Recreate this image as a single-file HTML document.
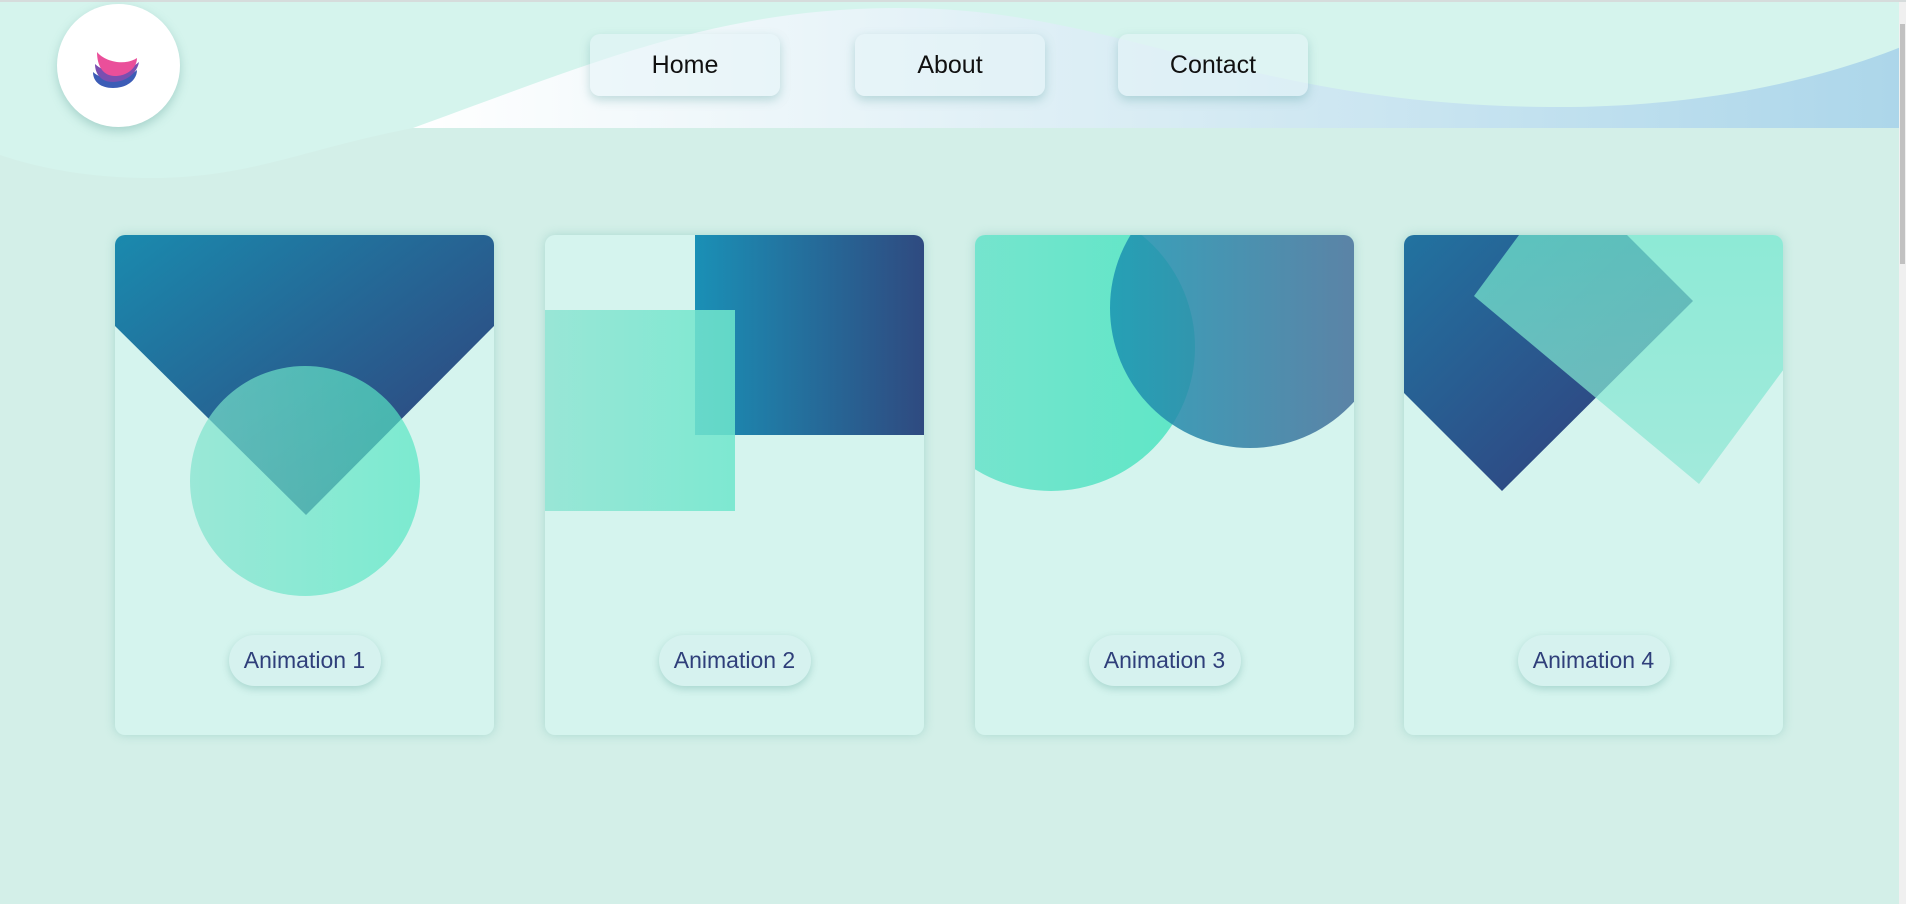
<!DOCTYPE html>
<html><head><meta charset="utf-8"><style>
*{margin:0;padding:0;box-sizing:border-box}
html,body{width:1906px;height:904px;overflow:hidden;background:#d3efe8;font-family:"Liberation Sans",sans-serif}
.topline{position:absolute;left:0;top:0;width:1906px;height:2px;background:#d6dcdc}
.hdr{position:absolute;left:0;top:0}
.logo{position:absolute;left:57px;top:4px;width:123px;height:123px;border-radius:50%;background:#fff;box-shadow:0 4px 10px rgba(80,150,140,.35)}
.nav{position:absolute;top:34px;height:62px;width:190px;border-radius:10px;background:rgba(230,244,248,.55);box-shadow:0 4px 10px rgba(90,160,160,.35);font-size:25px;color:#111;display:flex;align-items:center;justify-content:center}
.card{position:absolute;top:235px;width:379px;height:500px;border-radius:10px;background:#d5f4ee;overflow:hidden;box-shadow:0 0 10px rgba(120,190,180,.45)}
.card svg{position:absolute;left:0;top:0}
.pill{position:absolute;left:50%;transform:translateX(-50%);top:400px;width:152px;height:51px;border-radius:26px;background:#d6f2ef;box-shadow:0 3px 8px rgba(100,170,160,.4);color:#2f3f7a;font-size:23px;display:flex;align-items:center;justify-content:center}
.sb{position:absolute;right:0;top:2px;width:7px;height:902px;background:#f0f0f0}
.sb div{position:absolute;left:1px;top:22px;width:5px;height:240px;background:#c1c1c1}
</style></head><body>
<svg class="hdr" width="1906" height="200" viewBox="0 0 1906 200">
<defs><linearGradient id="wg" x1="0" x2="1" y1="0" y2="0"><stop offset="0" stop-color="#ffffff"/><stop offset="0.5" stop-color="#d8ecf4"/><stop offset="1" stop-color="#acd6ea"/></linearGradient></defs>
<path d="M0 0H1906V128H413C300 150 250 178 150 178C80 178 30 165 0 155Z" fill="#d5f4ed"/>
<path d="M413 128C600 60 720 8 900 8C1120 8 1240 105 1550 107C1700 108 1820 80 1906 45V128Z" fill="url(#wg)"/>
</svg>
<div class="topline"></div>
<div class="logo"><svg width="123" height="123" viewBox="0 0 123 123">
<path d="M36 68C44 76 66 78 80 66C80 76 70 84 56 84C44 84 36 78 36 68Z" fill="#3c5cb6"/>
<path d="M38 60C48 70 68 70 82 58C80 70 68 78 56 78C44 78 38 70 38 60Z" fill="#7a4fb0"/>
<path d="M40 48C48 58 68 62 80 54C80 64 70 72 58 72C46 72 40 62 40 48Z" fill="#ea4f9a"/>
</svg></div>
<div class="nav" style="left:590px">Home</div>
<div class="nav" style="left:855px">About</div>
<div class="nav" style="left:1118px">Contact</div>

<div class="card" style="left:115px"><svg width="379" height="500">
<defs><linearGradient id="d1" x1="0" y1="0" x2="1" y2="1"><stop offset="0" stop-color="#1a8aae"/><stop offset="1" stop-color="#333a76"/></linearGradient>
<linearGradient id="t1" x1="0" x2="1"><stop offset="0" stop-color="#7ee2cc"/><stop offset="1" stop-color="#52e6c2"/></linearGradient></defs>
<polygon points="0,0 379,0 379,91 191,280 0,91" fill="url(#d1)"/>
<circle cx="190" cy="246" r="115" fill="url(#t1)" opacity=".68"/>
</svg><div class="pill">Animation 1</div></div>

<div class="card" style="left:545px"><svg width="379" height="500">
<defs><linearGradient id="d2" x1="0" x2="1"><stop offset="0" stop-color="#1a90b6"/><stop offset="1" stop-color="#2f4a80"/></linearGradient>
<linearGradient id="t2" x1="0" x2="1"><stop offset="0" stop-color="#8ee4d2"/><stop offset="1" stop-color="#6ee6cc"/></linearGradient></defs>
<rect x="150" y="0" width="229" height="200" fill="url(#d2)"/>
<rect x="0" y="75" width="190" height="201" fill="url(#t2)" opacity=".85"/>
</svg><div class="pill">Animation 2</div></div>

<div class="card" style="left:975px"><svg width="379" height="500">
<defs><linearGradient id="d3" x1="0" x2="1"><stop offset="0" stop-color="#1a94b2"/><stop offset="1" stop-color="#4c6a96"/></linearGradient>
<linearGradient id="t3" x1="0" x2="1"><stop offset="0" stop-color="#7ce4d0"/><stop offset="1" stop-color="#5ee6c6"/></linearGradient></defs>
<circle cx="76" cy="112" r="144" fill="url(#t3)"/>
<circle cx="275" cy="73" r="140" fill="url(#d3)" opacity=".85"/>
</svg><div class="pill">Animation 3</div></div>

<div class="card" style="left:1404px"><svg width="379" height="500">
<defs><linearGradient id="d4" x1="0" y1="0" x2="1" y2="1"><stop offset="0" stop-color="#1a8ab0"/><stop offset="1" stop-color="#343878"/></linearGradient>
<linearGradient id="t4" x1="0" y1="0" x2="0" y2="1"><stop offset="0" stop-color="#5ee6c8"/><stop offset="1" stop-color="#8ee6d4"/></linearGradient></defs>
<polygon points="98,256 289,66 100,-123 -91,67" fill="url(#d4)"/>
<polygon points="70,61 295,249 470,12 245,-176" fill="url(#t4)" opacity=".72"/>
</svg><div class="pill">Animation 4</div></div>

<div class="sb"><div></div></div>
</body></html>
